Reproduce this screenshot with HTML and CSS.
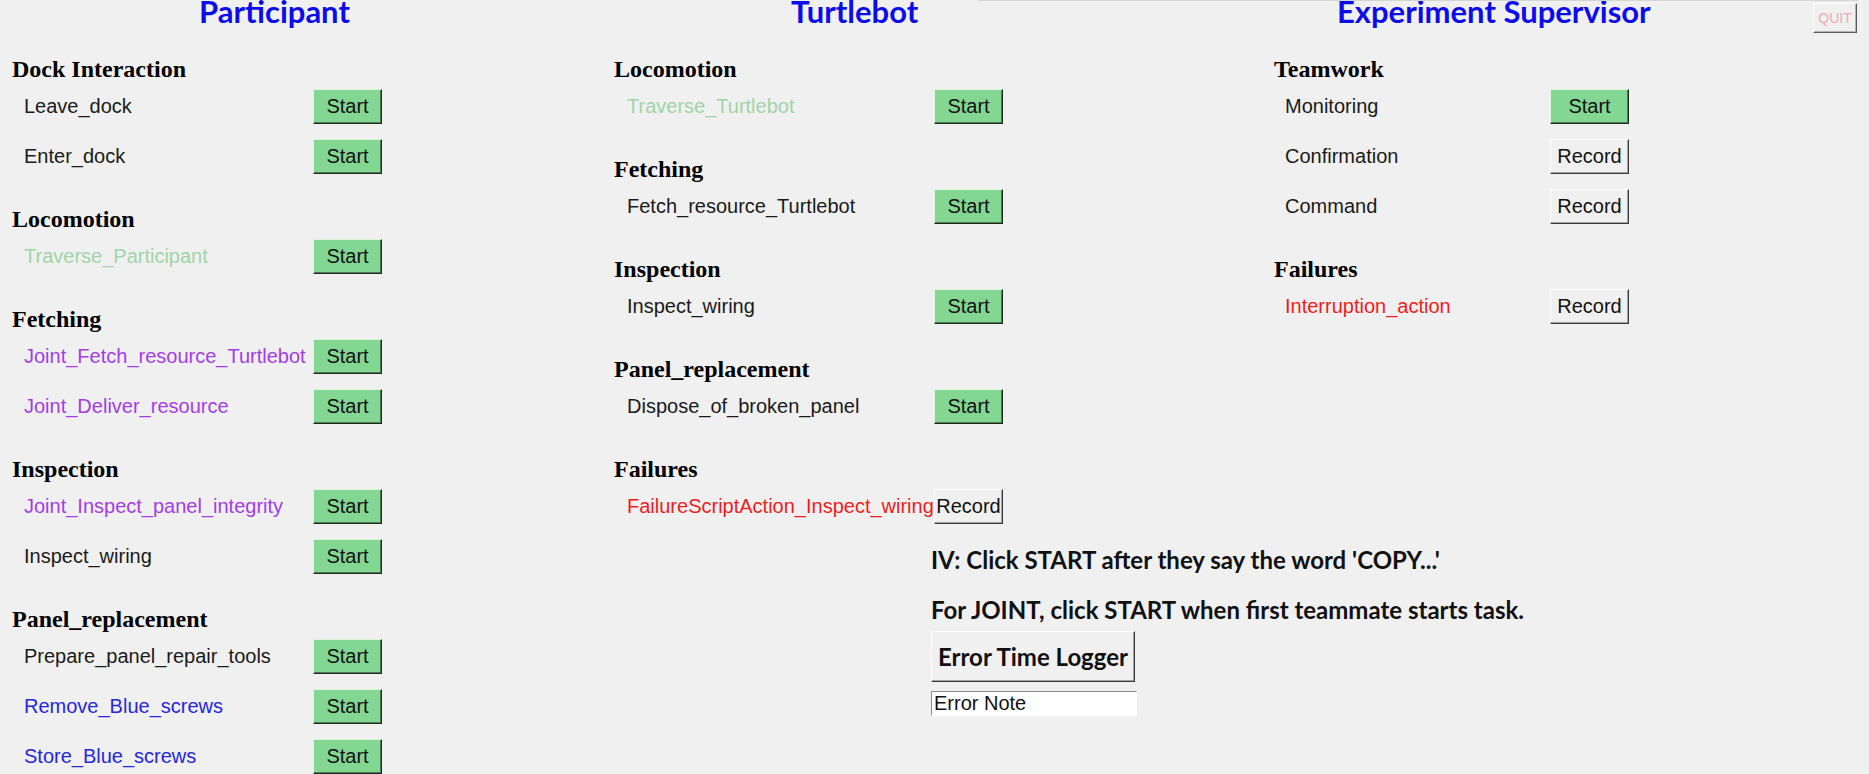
FILE: index.html
```html
<!DOCTYPE html>
<html lang="en">
<head>
<meta charset="utf-8">
<title>Task Logger</title>
<link rel="stylesheet" href="styles.css">
</head>
<body>
<div class="frame-edge"></div>
<button class="btn btn-quit">QUIT</button>
<main class="board">
  <section class="col col-participant">
    <h1 class="title">Participant</h1>
    <div class="group">
      <h2 class="group-head">Dock Interaction</h2>
      <div class="row"><span class="label">Leave_dock</span><button class="btn btn-start">Start</button></div>
      <div class="row"><span class="label">Enter_dock</span><button class="btn btn-start">Start</button></div>
    </div>
    <div class="group">
      <h2 class="group-head">Locomotion</h2>
      <div class="row"><span class="label c-pale">Traverse_Participant</span><button class="btn btn-start">Start</button></div>
    </div>
    <div class="group">
      <h2 class="group-head">Fetching</h2>
      <div class="row"><span class="label c-joint">Joint_Fetch_resource_Turtlebot</span><button class="btn btn-start">Start</button></div>
      <div class="row"><span class="label c-joint">Joint_Deliver_resource</span><button class="btn btn-start">Start</button></div>
    </div>
    <div class="group">
      <h2 class="group-head">Inspection</h2>
      <div class="row"><span class="label c-joint">Joint_Inspect_panel_integrity</span><button class="btn btn-start">Start</button></div>
      <div class="row"><span class="label">Inspect_wiring</span><button class="btn btn-start">Start</button></div>
    </div>
    <div class="group">
      <h2 class="group-head">Panel_replacement</h2>
      <div class="row"><span class="label">Prepare_panel_repair_tools</span><button class="btn btn-start">Start</button></div>
      <div class="row"><span class="label c-blue">Remove_Blue_screws</span><button class="btn btn-start">Start</button></div>
      <div class="row"><span class="label c-blue">Store_Blue_screws</span><button class="btn btn-start">Start</button></div>
    </div>
  </section>

  <section class="col col-turtlebot">
    <h1 class="title">Turtlebot</h1>
    <div class="group">
      <h2 class="group-head">Locomotion</h2>
      <div class="row"><span class="label c-pale">Traverse_Turtlebot</span><button class="btn btn-start">Start</button></div>
    </div>
    <div class="group">
      <h2 class="group-head">Fetching</h2>
      <div class="row"><span class="label">Fetch_resource_Turtlebot</span><button class="btn btn-start">Start</button></div>
    </div>
    <div class="group">
      <h2 class="group-head">Inspection</h2>
      <div class="row"><span class="label">Inspect_wiring</span><button class="btn btn-start">Start</button></div>
    </div>
    <div class="group">
      <h2 class="group-head">Panel_replacement</h2>
      <div class="row"><span class="label">Dispose_of_broken_panel</span><button class="btn btn-start">Start</button></div>
    </div>
    <div class="group">
      <h2 class="group-head">Failures</h2>
      <div class="row"><span class="label c-red">FailureScriptAction_Inspect_wiring</span><button class="btn btn-record">Record</button></div>
    </div>
    <div class="notes">
      <p class="note note-iv">IV: Click START after they say the word 'COPY...'</p>
      <p class="note note-joint">For JOINT, click START when first teammate starts task.</p>
      <button class="btn btn-logger">Error Time Logger</button>
      <input class="entry" type="text" value="Error Note">
    </div>
  </section>

  <section class="col col-supervisor">
    <h1 class="title">Experiment Supervisor</h1>
    <div class="group">
      <h2 class="group-head">Teamwork</h2>
      <div class="row"><span class="label">Monitoring</span><button class="btn btn-start">Start</button></div>
      <div class="row"><span class="label">Confirmation</span><button class="btn btn-record">Record</button></div>
      <div class="row"><span class="label">Command</span><button class="btn btn-record">Record</button></div>
    </div>
    <div class="group">
      <h2 class="group-head">Failures</h2>
      <div class="row"><span class="label c-red">Interruption_action</span><button class="btn btn-record">Record</button></div>
    </div>
  </section>
</main>
</body>
</html>
```

FILE: styles.css
```css
html, body {
  margin: 0;
  background: #f0f0f0;
}

body {
  position: relative;
  width: 1869px;
  height: 774px;
  overflow: hidden;
  font-family: "Liberation Sans", Arial, sans-serif;
}

.frame-edge {
  position: absolute;
  left: 978px;
  top: 0;
  width: 880px;
  height: 1px;
  background: #d4d4d4;
}

.board {
  display: grid;
  grid-template-columns: 602px 660px 1fr;
  padding-left: 12px;
}

.col {
  --lw: 289px;
  --bw: 69px;
  --pad: 12px;
}

.col-turtlebot {
  --lw: 307px;
  --pad: 13px;
}

.col-supervisor {
  --lw: 265px;
  --bw: 79px;
  --pad: 11px;
}

.title {
  margin: -5px 0 0;
  height: 36px;
  font: 700 31px/32px Lato, "Open Sans", sans-serif;
  color: #0b0bec;
  white-space: nowrap;
}

.col-participant .title { padding-left: 187px; }
.col-turtlebot .title { padding-left: 177px; }
.col-supervisor .title { padding-left: 63px; }

.group {
  margin-top: 26px;
}

.group-head {
  margin: 0;
  height: 24px;
  font: 700 24px/24px "Liberation Serif", "Times New Roman", serif;
  color: #000;
  white-space: nowrap;
}

.row {
  display: grid;
  grid-template-columns: var(--lw) var(--bw);
  align-items: center;
  height: 50px;
  padding-left: var(--pad);
}

.label {
  font-size: 20px;
  color: #1a1a1a;
  white-space: nowrap;
}

.c-pale { color: #9fd5a7; }
.c-joint { color: #a23de6; }
.c-blue { color: #2626dc; }
.c-red { color: #f01c1c; }

.btn {
  box-sizing: border-box;
  margin: 0;
  padding: 0;
  font-family: "Liberation Sans", Arial, sans-serif;
  font-size: 20px;
  color: #111;
  border: 1px solid;
  border-radius: 0;
  cursor: pointer;
}

.btn-start,
.btn-record {
  width: var(--bw);
  height: 35px;
}

.btn-start {
  background: #84d792;
  border-color: #dff5e2 #1d2a1f #1d2a1f #dff5e2;
  box-shadow: inset -1px -1px 0 #4c7a54;
}

.btn-record {
  background: #f0f0f0;
  border-color: #ffffff #3a3a3a #3a3a3a #ffffff;
  box-shadow: inset -1px -1px 0 #a0a0a0;
}

.notes {
  display: flex;
  flex-direction: column;
  align-items: flex-start;
  margin: 14px 0 0 317px;
}

.note {
  margin: 0;
  height: 30px;
  font: 700 24px/30px Lato, "Open Sans", sans-serif;
  color: #111;
  white-space: nowrap;
}

.note-iv {
  margin-bottom: 20px;
}

.note-joint {
  margin-bottom: 6px;
}

.btn-logger {
  width: 204px;
  height: 51px;
  font: 700 24px/1 Lato, "Open Sans", sans-serif;
  background: #f0f0f0;
  border-color: #ffffff #3a3a3a #3a3a3a #ffffff;
  box-shadow: inset -1px -1px 0 #a0a0a0;
}

.entry {
  box-sizing: border-box;
  width: 206px;
  height: 25px;
  margin-top: 9px;
  padding: 0 2px;
  font: 20px/21px "Liberation Sans", Arial, sans-serif;
  color: #111;
  background: #fff;
  border: 1px solid;
  border-color: #8c8c8c #ffffff #ffffff #8c8c8c;
  outline: none;
}

.btn-quit {
  position: absolute;
  top: 3px;
  right: 12px;
  width: 44px;
  height: 30px;
  font-size: 14px;
  color: #f3a7b6;
  background: #f0f0f0;
  border-color: #ffffff #5a5a5a #5a5a5a #ffffff;
  box-shadow: inset -1px -1px 0 #b4b4b4;
}
```
